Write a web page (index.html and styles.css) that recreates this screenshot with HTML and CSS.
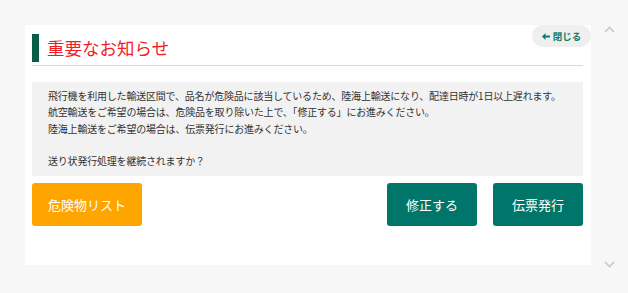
FILE: index.html
```html
<!DOCTYPE html>
<html lang="ja">
<head>
    <meta charset="UTF-8">
    <title>重要なお知らせ</title>
    <link rel="stylesheet" href="styles.css">
</head>
<body>
    <div class="page">
        <div class="dialog">
            <button class="close-btn">
                <svg width="8" height="7" viewBox="0 0 8 7"><path d="M0 3.5 L3.5 0 L3.5 2.4 L8 2.4 L8 4.6 L3.5 4.6 L3.5 7 Z" fill="#0f7a68"/></svg>
                閉じる
            </button>
            <div class="dialog-head">
                <span class="head-bar"></span>
                <h2>重要なお知らせ</h2>
            </div>
            <div class="message">
                <p>飛行機を利用した輸送区間で、品名が危険品に該当しているため、陸海上輸送になり、配達日時が1日以上遅れます。</p>
                <p>航空輸送をご希望の場合は、危険品を取り除いた上で、「修正する」にお進みください。</p>
                <p>陸海上輸送をご希望の場合は、伝票発行にお進みください。</p>
                <p>&nbsp;</p>
                <p>送り状発行処理を継続されますか？</p>
            </div>
            <div class="actions">
                <button class="btn btn-orange">危険物リスト</button>
                <div class="actions-right">
                    <button class="btn btn-green">修正する</button>
                    <button class="btn btn-green">伝票発行</button>
                </div>
            </div>
        </div>
        <div class="scrollbar">
            <svg width="11" height="7" viewBox="0 0 11 7"><path d="M1 6 L5.5 1.5 L10 6" fill="none" stroke="#c8c8c8" stroke-width="1.6"/></svg>
            <svg width="11" height="7" viewBox="0 0 11 7"><path d="M1 1 L5.5 5.5 L10 1" fill="none" stroke="#c8c8c8" stroke-width="1.6"/></svg>
        </div>
    </div>
</body>
</html>
```

FILE: styles.css
```css
body {
    margin: 0;
    background-color: #f7f7f7;
    font-family: "Noto Sans CJK JP", "Noto Sans", sans-serif;
    color: #333;
}
.page {
    display: flex;
    padding: 25px 0 0 25px;
    height: 245px;
}
.dialog {
    position: relative;
    width: 551px;
    height: 240px;
    padding: 0 8px 0 7px;
    background: white;
}
.close-btn {
    position: absolute;
    top: 0;
    right: 0;
    width: 59px;
    height: 22px;
    border: none;
    border-radius: 11px;
    background: #efefef;
    color: #0f7a68;
    font-family: inherit;
    font-size: 9.5px;
    font-weight: bold;
    display: flex;
    align-items: center;
    justify-content: center;
    gap: 3px;
    padding: 0;
}
.dialog-head {
    display: flex;
    align-items: center;
    margin-top: 9px;
    height: 28px;
    padding-bottom: 3px;
    border-bottom: 1px solid #d9d9d9;
}
.head-bar {
    width: 7px;
    height: 28px;
    background: #0c5c4a;
}
.dialog-head h2 {
    margin: 0 0 0 8px;
    font-size: 17.5px;
    font-weight: normal;
    color: #f21d24;
    line-height: 28px;
}
.message {
    margin-top: 16px;
    height: 81px;
    padding: 6px 16px 7px;
    background: #f2f2f2;
    font-size: 10px;
    line-height: 16.3px;
    letter-spacing: -0.2px;
    white-space: nowrap;
}
.message p {
    margin: 0;
}
.actions {
    display: flex;
    justify-content: space-between;
    margin-top: 7px;
}
.actions-right {
    display: flex;
    gap: 16px;
}
.btn {
    height: 43px;
    border: none;
    border-radius: 3px;
    color: white;
    font-family: inherit;
    font-size: 13px;
    padding: 0;
}
.btn-orange {
    width: 110px;
    background: #ffa500;
}
.btn-green {
    width: 90px;
    background: #00766a;
}
.scrollbar {
    flex: 1;
    display: flex;
    flex-direction: column;
    justify-content: space-between;
    align-items: center;
    padding: 1px 0 2px;
}
```
